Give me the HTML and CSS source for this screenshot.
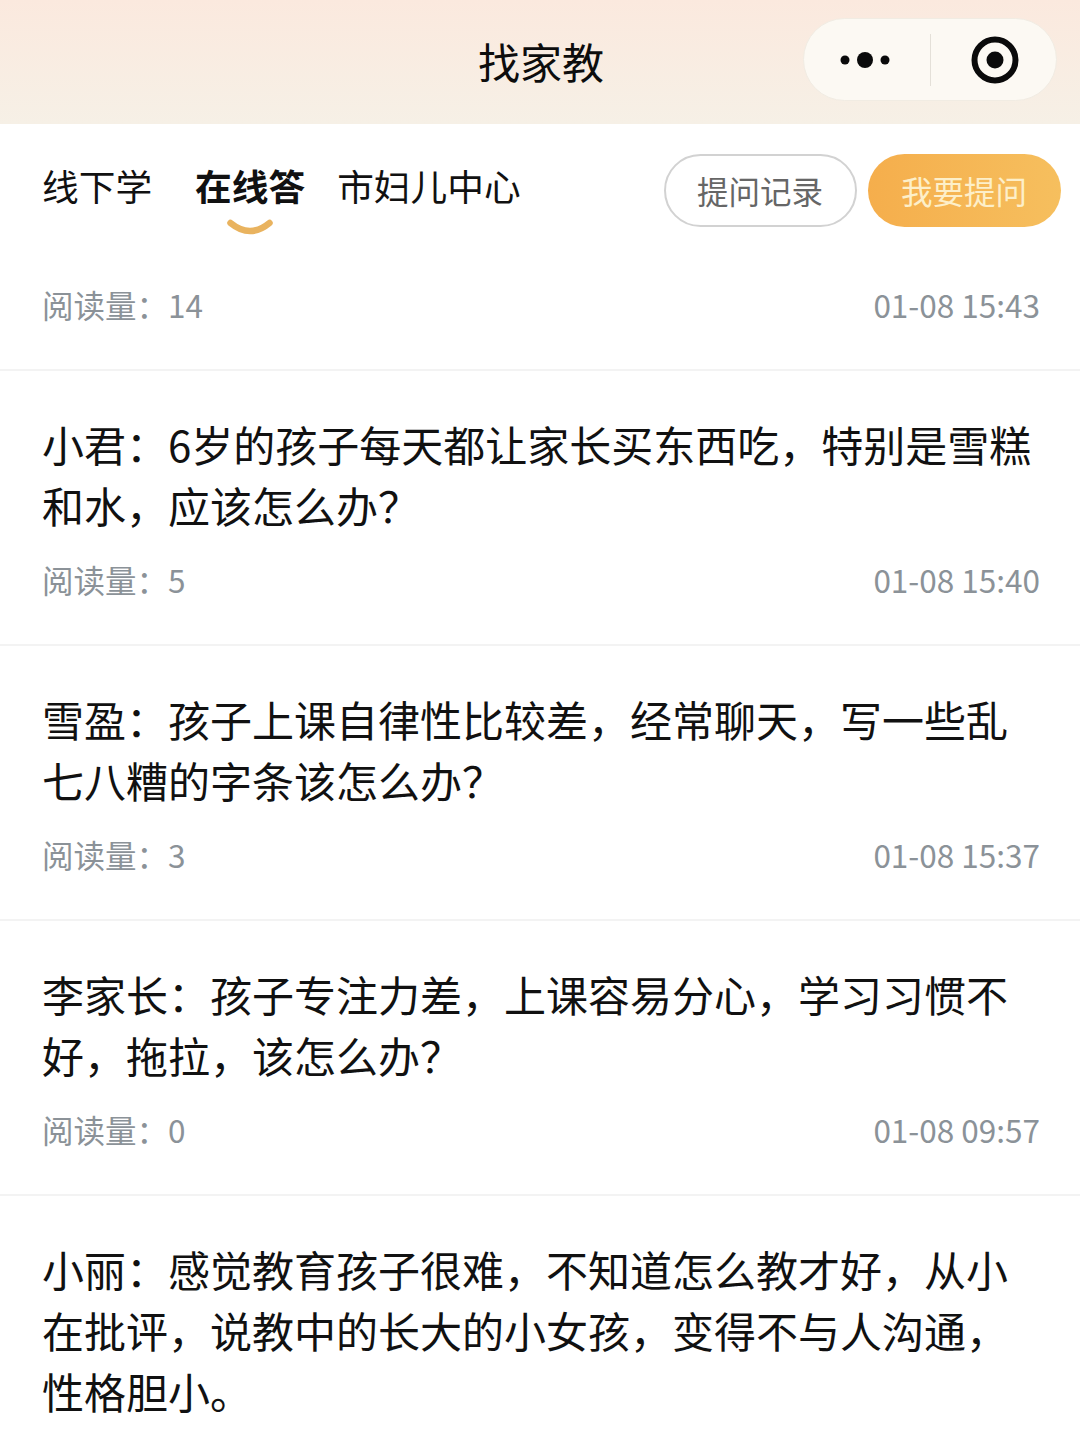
FILE: index.html
```html
<!DOCTYPE html>
<html lang="zh-CN">

<head>
    <meta charset="UTF-8">
    <meta name="viewport" content="width=device-width, initial-scale=1.0">
    <title>找家教</title>
    <link rel="stylesheet" href="styles.css">
</head>

<body>
    <header class="nav">
        <div></div>
        <h1 class="nav-title">找家教</h1>
        <div class="capsule">
            <div class="capsule-part">
                <svg class="icon-more" width="52" height="18" viewBox="0 0 52 18">
                    <circle cx="5" cy="9" r="4.5" fill="#0a0a0a" />
                    <circle cx="25" cy="9" r="8" fill="#0a0a0a" />
                    <circle cx="45" cy="9" r="4.5" fill="#0a0a0a" />
                </svg>
            </div>
            <div class="capsule-line"></div>
            <div class="capsule-part">
                <svg class="icon-close" width="48" height="48" viewBox="0 0 48 48">
                    <circle cx="24" cy="24" r="20.5" fill="none" stroke="#0a0a0a" stroke-width="6" />
                    <circle cx="24" cy="24" r="8.5" fill="#0a0a0a" />
                </svg>
            </div>
        </div>
    </header>

    <div class="tabs">
        <div class="tab tab-first">线下学</div>
        <div class="tab tab-active">
            在线答
            <svg class="tab-mark" width="46" height="18" viewBox="0 0 46 18">
                <path d="M3.5 4 Q23 20 42.5 4" fill="none" stroke="#e9b35f" stroke-width="6.5" stroke-linecap="round" />
            </svg>
        </div>
        <div class="tab">市妇儿中心</div>
        <div class="btn btn-plain">提问记录</div>
        <div class="btn btn-main">我要提问</div>
    </div>

    <div class="row row-cut">
        <div class="meta"><span>阅读量：14</span><span>01-08 15:43</span></div>
    </div>

    <div class="row">
        <p class="question">小君：6岁的孩子每天都让家长买东西吃，特别是雪糕和水，应该怎么办？</p>
        <div class="meta"><span>阅读量：5</span><span>01-08 15:40</span></div>
    </div>

    <div class="row">
        <p class="question">雪盈：孩子上课自律性比较差，经常聊天，写一些乱七八糟的字条该怎么办？</p>
        <div class="meta"><span>阅读量：3</span><span>01-08 15:37</span></div>
    </div>

    <div class="row">
        <p class="question">李家长：孩子专注力差，上课容易分心，学习习惯不好，拖拉，该怎么办？</p>
        <div class="meta"><span>阅读量：0</span><span>01-08 09:57</span></div>
    </div>

    <div class="row">
        <p class="question">小丽：感觉教育孩子很难，不知道怎么教才好，从小在批评，说教中的长大的小女孩，变得不与人沟通，性格胆小。</p>
    </div>
</body>

</html>
```

FILE: styles.css
```css
html,
body {
    margin: 0;
    height: 1441px;
    overflow: hidden;
}

body {
    font-family: "Noto Sans CJK SC", "Liberation Sans", sans-serif;
    background-color: #fff;
    color: #111;
}

.nav {
    height: 124px;
    display: grid;
    grid-template-columns: 1fr auto 1fr;
    align-items: center;
    background: linear-gradient(180deg, #fbe9de 0%, #f6f0e6 100%);
}

.nav-title {
    margin: 0 0 3px;
    padding-left: 2px;
    font-size: 42px;
    font-weight: 400;
    line-height: 1;
    color: #0d0d0d;
}

.capsule {
    justify-self: end;
    box-sizing: border-box;
    margin: 0 23px 5px 0;
    width: 254px;
    height: 83px;
    display: flex;
    align-items: center;
    border: 1px solid #f1ece3;
    border-radius: 42px;
    background-color: #fcf9f3;
}

.capsule-part {
    flex: 1;
    display: flex;
    justify-content: center;
    align-items: center;
}

.capsule-line {
    width: 1px;
    height: 52px;
    background-color: #e4e0d8;
}

.icon-more {
    margin-right: 1px;
}

.icon-close {
    margin-left: 4px;
}

.tabs {
    height: 146px;
    display: flex;
    align-items: flex-start;
    padding-left: 42px;
}

.tab {
    margin: 34px 32px 0 0;
    font-size: 36.7px;
    line-height: 54px;
    font-weight: 400;
    white-space: nowrap;
}

.tab-first {
    margin-right: 43px;
}

.tab-active {
    font-weight: 700;
    display: flex;
    flex-direction: column;
    align-items: center;
}

.tab-mark {
    margin-top: 7px;
}

.btn {
    box-sizing: border-box;
    width: 193px;
    height: 73px;
    margin-top: 30px;
    border-radius: 37px;
    display: flex;
    justify-content: center;
    align-items: center;
    padding-bottom: 1px;
    font-size: 31.5px;
}

.btn-plain {
    margin-left: 111px;
    margin-right: 11px;
    border: 2px solid #d2d2d2;
    color: #666;
}

.btn-main {
    background: linear-gradient(90deg, #f5ae4c 0%, #f6bf5e 100%);
    color: #fdefc9;
}

.row {
    box-sizing: border-box;
    height: 275px;
    padding: 42px 40px 0 42px;
    border-bottom: 2px solid #f3f3f3;
}

.row-cut {
    height: 101px;
    padding-top: 9px;
}

.row:last-child {
    height: auto;
    border-bottom: none;
}

.question {
    margin: 0;
    font-size: 42px;
    line-height: 61px;
    color: #111;
}

.meta {
    display: flex;
    justify-content: space-between;
    margin-top: 19px;
    font-size: 31.5px;
    line-height: 50px;
    color: #8b9298;
}

.row-cut .meta {
    margin-top: 0;
}
```
